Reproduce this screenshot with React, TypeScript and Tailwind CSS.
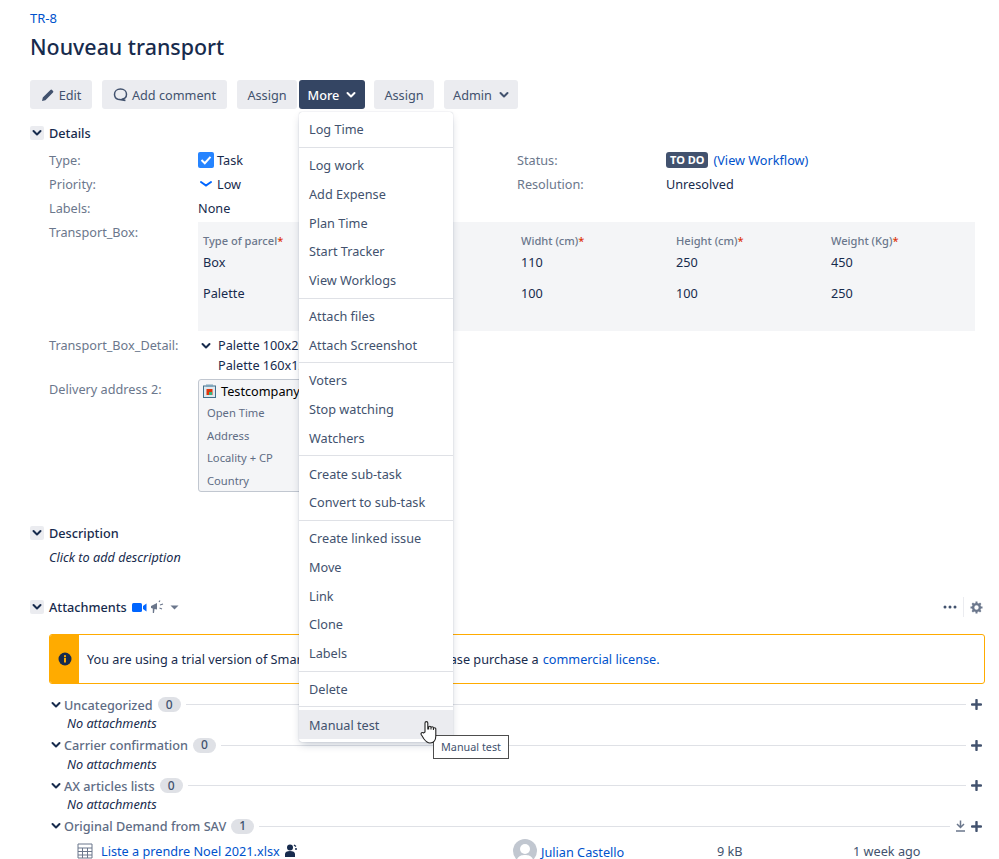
import * as React from 'react';

const MENU: string[][] = [
  ['Log Time'],
  ['Log work', 'Add Expense', 'Plan Time', 'Start Tracker', 'View Worklogs'],
  ['Attach files', 'Attach Screenshot'],
  ['Voters', 'Stop watching', 'Watchers'],
  ['Create sub-task', 'Convert to sub-task'],
  ['Create linked issue', 'Move', 'Link', 'Clone', 'Labels'],
  ['Delete'],
  ['Manual test'],
];

function Chevron({ className = '', color = '#172b4d' }: { className?: string; color?: string }) {
  return (
    <svg width="10" height="8" viewBox="0 0 10 8" className={className}>
      <path d="M1.5 2 L5 5.5 L8.5 2" fill="none" stroke={color} strokeWidth="2" strokeLinecap="round" strokeLinejoin="round" />
    </svg>
  );
}

function Plus() {
  return (
    <svg width="11" height="11" viewBox="0 0 11 11" className="shrink-0">
      <path d="M5.5 1 V10 M1 5.5 H10" stroke="#42526e" strokeWidth="2.4" strokeLinecap="round" />
    </svg>
  );
}

function Btn({ children, className = '' }: { children: React.ReactNode; className?: string }) {
  return (
    <div className={`flex h-[29px] items-center justify-center rounded-[3px] bg-[#ebecf0] text-[#42526e] ${className}`}>
      {children}
    </div>
  );
}

function SectionHead({ title, children }: { title: string; children?: React.ReactNode }) {
  return (
    <div className="flex items-center">
      <div className="flex h-[14px] w-[14px] items-center justify-center rounded-[2px] bg-[#ebecf0]">
        <Chevron />
      </div>
      <span className="ml-[5px] font-medium text-[#172b4d]">{title}</span>
      {children}
    </div>
  );
}

function Field({ label, children, className = '' }: { label: string; children?: React.ReactNode; className?: string }) {
  return (
    <div className={`flex ${className}`}>
      <div className="w-[149px] shrink-0 text-[#6b778c]">{label}</div>
      <div className="flex min-w-0 items-center text-[#172b4d]">{children}</div>
    </div>
  );
}

function Group({ title, count, tools, empty = true }: { title: string; count: number; tools?: React.ReactNode; empty?: boolean }) {
  return (
    <div className="h-[40.5px]">
      <div className="flex h-[19px] items-center">
        <Chevron className="mr-[3px] shrink-0" />
        <span className="font-medium text-[#5e6c84]">{title}</span>
        <span className="ml-[5px] flex h-[15px] w-[23px] items-center justify-center rounded-full bg-[#dfe1e6] text-[12px] font-medium text-[#42526e]">
          {count}
        </span>
        <div className="ml-[5px] h-px flex-1 bg-[#dfe1e6]" />
        <div className="ml-[5px] flex items-center gap-[5px]">
          {tools}
          <Plus />
        </div>
      </div>
      {empty && <div className="ml-[16px] h-[19px] leading-[19px] italic text-[#172b4d]">No attachments</div>}
    </div>
  );
}

export default function App() {
  return (
    <div className="relative h-[859px] w-[999px] overflow-hidden bg-white pl-[30px] text-[12.7px] leading-[20px] text-[#172b4d] [font-family:'Noto_Sans',sans-serif]">
      <div className="pt-[9px] text-[13px] leading-[18px] text-[#0052cc]">TR-8</div>
      <h1 className="mt-[5px] text-[21.4px] leading-[30px] font-medium text-[#172b4d]">Nouveau transport</h1>

      {/* toolbar */}
      <div className="mt-[18px] flex">
        <Btn className="w-[62px] gap-[4px]">
          <svg width="14" height="14" viewBox="0 0 14 14">
            <path d="M1 13 L1.8 9.6 L9.4 2 a1.2 1.2 0 0 1 1.7 0 L12 2.9 a1.2 1.2 0 0 1 0 1.7 L4.4 12.2 Z" fill="#42526e" />
          </svg>
          Edit
        </Btn>
        <Btn className="ml-[10px] w-[125px] gap-[4px]">
          <svg width="15" height="15" viewBox="0 0 15 15">
            <path d="M7.5 2 C11 2 13.5 4.2 13.5 7.2 C13.5 10 11.4 12 8.6 12.2 L12.4 13.5 L5 12.3 C3 11.6 1.5 9.7 1.5 7.2 C1.5 4.2 4 2 7.5 2 Z" fill="none" stroke="#42526e" strokeWidth="1.5" />
          </svg>
          Add comment
        </Btn>
        <Btn className="ml-[10px] w-[60px]">Assign</Btn>
        <div className="ml-[2px] flex h-[29px] w-[66px] items-center justify-center gap-[7px] rounded-[3px] bg-[#344563] font-medium text-white">
          More
          <Chevron color="#ffffff" />
        </div>
        <Btn className="ml-[9px] w-[60px]">Assign</Btn>
        <Btn className="ml-[10px] w-[74px] gap-[7px]">
          Admin
          <Chevron color="#42526e" />
        </Btn>
      </div>

      {/* details */}
      <div className="mt-[14px]">
        <SectionHead title="Details" />
      </div>
      <div className="relative mt-[7px] ml-[19px] w-[926px]">
        <div className="grid h-[72px] grid-cols-[468px_1fr] grid-rows-[24px_24px_24px] items-start">
          <Field label="Type:">
            <svg width="16" height="16" viewBox="0 0 16 16" className="mr-[3px]">
              <rect width="16" height="16" rx="2" fill="#2684ff" />
              <path d="M3.5 8 L6.8 11.2 L12.5 4.8" fill="none" stroke="#fff" strokeWidth="2" />
            </svg>
            Task
          </Field>
          <Field label="Status:">
            <span className="mr-[5px] flex h-[16px] items-center rounded-[3px] bg-[#42526e] px-[4px] text-[11px] font-bold text-white">TO DO</span>
            <span className="text-[#0052cc]">(View Workflow)</span>
          </Field>
          <Field label="Priority:">
            <svg width="16" height="10" viewBox="0 0 16 10" className="mr-[3px]">
              <path d="M3 3 L8 6.5 L13 3" fill="none" stroke="#0065ff" strokeWidth="2" strokeLinecap="round" />
            </svg>
            Low
          </Field>
          <Field label="Resolution:">Unresolved</Field>
          <Field label="Labels:" className="col-span-2">None</Field>
        </div>

        <div className="flex h-[109px]">
          <div className="w-[149px] shrink-0 text-[#6b778c]">Transport_Box:</div>
          <div className="flex-1 bg-[#f4f5f7] pt-[9px] pl-[5px]">
            <div className="grid grid-cols-[318px_155px_155px_1fr]">
              {['Type of parcel', 'Widht (cm)', 'Height (cm)', 'Weight (Kg)'].map((h) => (
                <div key={h} className="text-[11.1px] leading-[20px] font-medium text-[#6b778c]">
                  {h}
                  <span className="text-[#de350b]">*</span>
                </div>
              ))}
              {['Box', '110', '250', '450'].map((v, i) => (
                <div key={i} className="h-[32px] leading-[22px]">{v}</div>
              ))}
              {['Palette', '100', '100', '250'].map((v, i) => (
                <div key={i} className="leading-[20px]">{v}</div>
              ))}
            </div>
          </div>
        </div>

        <div className="mt-[4px] flex">
          <div className="w-[149px] shrink-0 text-[#6b778c]">Transport_Box_Detail:</div>
          <div className="flex">
            <Chevron className="mt-[7px] ml-[3px] mr-[7px]" />
            <div className="leading-[20px]">
              <div>Palette 100x200</div>
              <div>Palette 160x120</div>
            </div>
          </div>
        </div>

        <div className="mt-[4px] flex">
          <div className="w-[149px] shrink-0 text-[#6b778c]">Delivery address 2:</div>
          <div className="h-[113px] w-[200px] rounded-[3px] border border-[#c1c7d0] bg-[#f4f5f7] pl-[4px] pt-[1px]">
            <div className="flex h-[20px] items-center gap-[5px]">
              <svg width="13" height="14" viewBox="0 0 13 14">
                <rect x="0.5" y="2" width="12" height="11.5" fill="#dfe9ef" stroke="#42708c" />
                <rect x="3" y="0.5" width="7" height="2.5" fill="#7fa5bb" />
                <rect x="3.5" y="5" width="6" height="6" fill="#de350b" />
                <rect x="6" y="8" width="3" height="3" fill="#36b37e" />
              </svg>
              <span className="text-black">Testcompany</span>
            </div>
            <div className="mt-[1px] pl-[4px] text-[11.2px] leading-[22.7px] text-[#5e6c84]">
              <div>Open Time</div>
              <div>Address</div>
              <div>Locality + CP</div>
              <div>Country</div>
            </div>
          </div>
        </div>
      </div>

      {/* description */}
      <div className="mt-[31px]">
        <SectionHead title="Description" />
      </div>
      <div className="mt-[4px] ml-[19px] italic text-[#172b4d]">Click to add description</div>

      {/* attachments */}
      <div className="mt-[30px] flex w-[953px] items-center">
        <SectionHead title="Attachments">
          <svg width="15" height="11" viewBox="0 0 15 11" className="ml-[5px]">
            <rect y="1" width="10" height="9" rx="1.5" fill="#0065ff" />
            <path d="M11 4 L14.5 1.5 V9.5 L11 7 Z" fill="#0065ff" />
          </svg>
          <svg width="15" height="14" viewBox="0 0 15 14" className="ml-[3px]">
            <path d="M1 6 L7 3 V9.5 L4.5 9 L4 13 L2.8 13 L2.8 8.5 L1 8 Z" fill="#6b778c" />
            <path d="M9 2 L10 0.5 M10 5 L13 4 M9.5 8 L12 9" stroke="#6b778c" strokeWidth="1.2" />
          </svg>
          <svg width="9" height="5" viewBox="0 0 9 5" className="ml-[5px]">
            <path d="M0.5 0.5 H8.5 L4.5 4.5 Z" fill="#6b778c" />
          </svg>
        </SectionHead>
        <div className="ml-auto flex items-center">
          <svg width="14" height="4" viewBox="0 0 14 4">
            <circle cx="2" cy="2" r="1.5" fill="#42526e" />
            <circle cx="7" cy="2" r="1.5" fill="#42526e" />
            <circle cx="12" cy="2" r="1.5" fill="#42526e" />
          </svg>
          <div className="mx-[6px] h-[20px] w-px bg-[#ebecf0]" />
          <svg width="13" height="13" viewBox="0 0 13 13">
            <circle cx="6.5" cy="6.5" r="3.4" fill="none" stroke="#6b778c" strokeWidth="2.4" />
            <path d="M6.5 0.5 V2.5 M6.5 10.5 V12.5 M0.5 6.5 H2.5 M10.5 6.5 H12.5 M2.3 2.3 L3.7 3.7 M9.3 9.3 L10.7 10.7 M2.3 10.7 L3.7 9.3 M9.3 3.7 L10.7 2.3" stroke="#6b778c" strokeWidth="2" />
          </svg>
        </div>
      </div>

      <div className="mt-[17px] ml-[19px] flex h-[50px] w-[936px] overflow-hidden rounded-[3px] border border-[#ffab00]">
        <div className="flex w-[29px] shrink-0 items-center justify-center bg-[#ffab00]">
          <svg width="14" height="14" viewBox="0 0 14 14">
            <circle cx="7" cy="7" r="6.5" fill="#172b4d" />
            <rect x="6" y="6" width="2" height="4.5" fill="#ffab00" />
            <rect x="6" y="3.2" width="2" height="2" fill="#ffab00" />
          </svg>
        </div>
        <div className="flex items-center pl-[8px] whitespace-nowrap">
          You are using a trial version of SmartAttachments for Jira. Please purchase a
          <span className="ml-[4px] text-[#0052cc]">commercial license</span>
          <span className="text-[#0052cc]">.</span>
        </div>
      </div>

      <div className="mt-[11px] ml-[21px] w-[934px] pr-[3px]">
        <Group title="Uncategorized" count={0} />
        <Group title="Carrier confirmation" count={0} />
        <Group title="AX articles lists" count={0} />
        <Group
          title="Original Demand from SAV"
          count={1}
          empty={false}
          tools={
            <svg width="11" height="12" viewBox="0 0 11 12">
              <path d="M5.5 0.5 V7 M2 4 L5.5 7.5 L9 4 M1 11 H10" fill="none" stroke="#6b778c" strokeWidth="1.5" />
            </svg>
          }
        />
      </div>

      {/* file row */}
      <div className="mt-[-18px] ml-[47px] flex h-[24px] items-center whitespace-nowrap">
        <svg width="16" height="16" viewBox="0 0 16 16" className="shrink-0">
          <path d="M1 1 H15 V15 H1 Z M1 5 H15 M1 8.5 H15 M1 12 H15 M5.5 5 V15 M10.5 5 V15" fill="none" stroke="#6b778c" strokeWidth="1" />
        </svg>
        <span className="ml-[8px] w-[183px] text-[#0052cc]">Liste a prendre Noel 2021.xlsx</span>
        <svg width="14" height="14" viewBox="0 0 14 14" className="shrink-0">
          <circle cx="6" cy="3.5" r="3" fill="#172b4d" />
          <path d="M1 13 V10 C1 8 3 7 6 7 C9 7 11 8 11 10 V13 Z" fill="#172b4d" />
          <path d="M10 1 L12 2.5 M11 5 L13 5" stroke="#172b4d" strokeWidth="1.3" />
        </svg>
        <svg width="24" height="24" viewBox="0 0 24 24" className="ml-[215px] shrink-0">
          <circle cx="12" cy="12" r="12" fill="#c1c7d0" />
          <circle cx="12" cy="10" r="5" fill="#fff" />
          <path d="M3 24 C4 17 8 16 12 16 C16 16 20 17 21 24 Z" fill="#fff" />
        </svg>
        <span className="ml-[4px] w-[176px] pt-[2px] text-[#0052cc]">Julian Castello</span>
        <span className="w-[136px] text-[#42526e]">9 kB</span>
        <span className="text-[#42526e]">1 week ago</span>
      </div>

      {/* dropdown menu, open over the page */}
      <div className="absolute top-[112px] left-[299px] w-[154px] divide-y divide-[#dfe1e6] rounded-[3px] bg-white shadow-[0_4px_8px_-2px_rgba(9,30,66,0.25),0_0_1px_rgba(9,30,66,0.31)]">
        {MENU.map((section, s) => (
          <div key={s} className="py-[3px]">
            {section.map((item) => (
              <div
                key={item}
                className={`flex h-[28.75px] items-center pl-[10px] text-[#42526e] ${item === 'Manual test' ? 'bg-[#ebecf0]' : ''}`}
              >
                {item}
              </div>
            ))}
          </div>
        ))}
      </div>

      {/* native tooltip and pointer */}
      <div className="absolute top-[735px] left-[433px] flex h-[24px] w-[76px] items-center justify-center border border-[#4d4d4d] bg-white text-[10.8px] text-[#42526e]">
        Manual test
      </div>
      <svg width="18" height="24" viewBox="0 0 18 24" className="absolute top-[720px] left-[420px]">
        <path
          d="M5 12 V3 a1.4 1.4 0 0 1 2.8 0 V9 L8.6 9 V7.5 a1.2 1.2 0 0 1 2.4 0 V9.5 V8 a1.2 1.2 0 0 1 2.4 0 V10 V9 a1.2 1.2 0 0 1 2.4 0 V16 C15.8 20 14 23 10 23 C7 23 5.5 21 4 19 L1.2 14.5 C0.5 13 2.4 11.8 3.5 13 Z"
          fill="#fff"
          stroke="#222"
          strokeWidth="1.1"
        />
      </svg>
    </div>
  );
}
